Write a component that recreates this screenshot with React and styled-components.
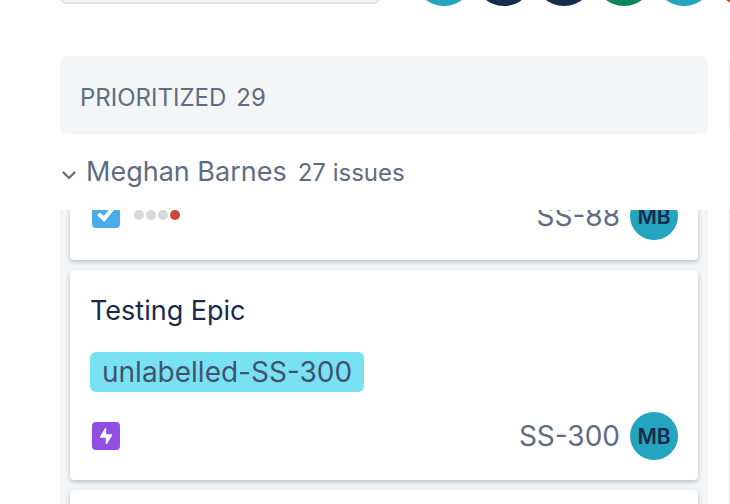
import styled, { createGlobalStyle } from 'styled-components';

const GlobalStyle = createGlobalStyle`
  * {
    box-sizing: border-box;
  }

  body {
    margin: 0;
    background: #ffffff;
    font-family: Inter, 'Liberation Sans', sans-serif;
  }
`;

const Page = styled.main`
  display: flex;
  flex-direction: column;
  height: 100vh;
  overflow: hidden;
`;

// Toolbar
const Toolbar = styled.div`
  display: flex;
  flex-shrink: 0;
  align-items: flex-end;
  gap: 34px;
  height: 6px;
  padding-left: 60px;
`;

const SearchInput = styled.input`
  flex-shrink: 0;
  width: 320px;
  height: 64px;
  margin-bottom: 2px;
  border: 2px solid #dfe1e6;
  border-radius: 6px;
  background: #f4f5f7;
`;

const AvatarGroup = styled.div`
  display: flex;
`;

const Avatar = styled.span`
  display: flex;
  flex-shrink: 0;
  align-items: center;
  justify-content: center;
  width: ${({ $size }) => $size}px;
  height: ${({ $size }) => $size}px;
  border-radius: 50%;
  background: ${({ $color }) => $color};
  color: #172b4d;
  font-size: 21px;
  font-weight: 600;
`;

// Board
const Columns = styled.div`
  display: grid;
  grid-template-columns: minmax(0, 1fr) 2px;
  gap: 20px;
  padding-left: 60px;
`;

const HeaderRow = styled(Columns)`
  flex-shrink: 0;
  margin-top: 50px;
`;

const ListRow = styled(Columns)`
  flex: 1;
  min-height: 0;
  overflow: hidden;
`;

const ColumnHeader = styled.h2`
  display: flex;
  align-items: center;
  gap: 10px;
  min-width: 200px;
  height: 78px;
  margin: 0;
  padding: 4px 20px 0;
  border-radius: 8px;
  background: #f4f5f7;
  color: #5e6c84;
  font-size: 24px;
  font-weight: 400;
`;

const Swimlane = styled.button`
  display: flex;
  flex-shrink: 0;
  align-items: baseline;
  height: 76px;
  padding: 0 60px;
  border: 0;
  background: #ffffff;
  color: #5e6c84;
  font-family: inherit;
  font-size: 24px;
  line-height: 76px;
  text-align: left;

  svg {
    flex-shrink: 0;
    margin-right: 8px;
  }
`;

const SwimlaneName = styled.span`
  margin-right: 11px;
  font-size: 27px;
`;

const ColumnBody = styled.div`
  min-width: 200px;
  padding: 0 10px;
  background: #f4f5f7;
`;

// The list is scrolled part of the way past its first card
const CardStack = styled.div`
  display: flex;
  flex-direction: column;
  gap: 10px;
  margin-top: -38px;
`;

// Card
const Card = styled.article`
  display: flex;
  flex-direction: column;
  align-items: flex-start;
  gap: 20px;
  padding: 20px;
  border-radius: 4px;
  background: #ffffff;
  box-shadow: 0 2px 4px rgba(9, 30, 66, 0.25);
`;

const CardTitle = styled.h3`
  margin: 0;
  color: #172b4d;
  font-size: 27px;
  font-weight: 400;
  line-height: 42px;
`;

const EpicLabel = styled.a`
  padding: 0 12px;
  border-radius: 6px;
  background: #79e2f2;
  color: #42526e;
  font-size: 28px;
  line-height: 40px;
  text-decoration: none;
`;

const CardFooter = styled.div`
  display: flex;
  align-items: center;
  justify-content: space-between;
  width: 100%;
  height: 48px;
  padding-left: 2px;
`;

const IssueFields = styled.div`
  display: flex;
  align-items: center;
  gap: 14px;
  padding-bottom: ${({ $hasDays }) => ($hasDays ? 4 : 0)}px;
`;

const IssueMeta = styled.div`
  display: flex;
  align-items: center;
  gap: 10px;
`;

const IssueKey = styled.a`
  color: #5e6c84;
  font-size: 28px;
  text-decoration: none;
`;

const Days = styled.div`
  display: flex;
  gap: 2px;
  padding-top: 2px;
`;

const Day = styled.span`
  width: 10px;
  height: 10px;
  border-radius: 50%;
  background: ${({ $current }) => ($current ? '#d04437' : '#d8d8d8')};
`;

const ChevronIcon = () => (
  <svg width="18" height="12" viewBox="0 0 18 12" aria-hidden="true">
    <path d="M3.5 3.5L9 9L14.5 3.5" fill="none" stroke="#6b6b66" strokeWidth="2.2" strokeLinecap="round" strokeLinejoin="round" />
  </svg>
);

const TaskIcon = () => (
  <svg width="28" height="28" viewBox="0 0 28 28" role="img" aria-label="Task">
    <rect width="28" height="28" rx="4" fill="#4bade8" />
    <path d="M7.8 15L12 19L20.5 8.5" fill="none" stroke="#fff" strokeWidth="4" strokeLinecap="round" />
  </svg>
);

const EpicIcon = () => (
  <svg width="28" height="28" viewBox="0 0 28 28" role="img" aria-label="Epic">
    <rect width="28" height="28" rx="4" fill="#904ee2" />
    <path d="M13.2 6L8 14.4V15.8H13.8V22H15L20 13.4V12.2H14.2V6Z" fill="#fff" />
  </svg>
);

const members = [
  { id: 1, color: '#25a4c0' },
  { id: 2, color: '#172b4d' },
  { id: 3, color: '#172b4d' },
  { id: 4, color: '#0b875b' },
  { id: 5, color: '#25a4c0' },
  { id: 6, color: '#de350b' },
];

const issues = [
  { key: 'SS-88', type: 'task', days: 4 },
  { key: 'SS-300', type: 'epic', title: 'Testing Epic', label: 'unlabelled-SS-300' },
];

const IssueCard = ({ issue }) => (
  <Card>
    {issue.title && <CardTitle>{issue.title}</CardTitle>}
    {issue.label && <EpicLabel href="#">{issue.label}</EpicLabel>}
    <CardFooter>
      <IssueFields $hasDays={Boolean(issue.days)}>
        {issue.type === 'epic' ? <EpicIcon /> : <TaskIcon />}
        {issue.days && (
          <Days>
            {Array.from({ length: issue.days }, (_, i) => (
              <Day key={i} $current={i === issue.days - 1} />
            ))}
          </Days>
        )}
      </IssueFields>
      <IssueMeta>
        <IssueKey href="#">{issue.key}</IssueKey>
        <Avatar $size={48} $color="#25a4c0">MB</Avatar>
      </IssueMeta>
    </CardFooter>
  </Card>
);

const App = () => {
  return (
    <Page>
      <GlobalStyle />
      <Toolbar>
        <SearchInput type="search" aria-label="Search this board" />
        <AvatarGroup>
          {members.map((member) => (
            <Avatar key={member.id} $size={60} $color={member.color} />
          ))}
        </AvatarGroup>
      </Toolbar>
      <HeaderRow>
        <ColumnHeader>
          <span>PRIORITIZED</span>
          <span>29</span>
        </ColumnHeader>
        <ColumnHeader />
      </HeaderRow>
      <Swimlane type="button" aria-expanded="true">
        <ChevronIcon />
        <SwimlaneName>Meghan Barnes</SwimlaneName>
        <span>27 issues</span>
      </Swimlane>
      <ListRow>
        <ColumnBody>
          <CardStack>
            {issues.map((issue) => (
              <IssueCard key={issue.key} issue={issue} />
            ))}
            <Card />
          </CardStack>
        </ColumnBody>
        <ColumnBody />
      </ListRow>
    </Page>
  );
};

export default App;
